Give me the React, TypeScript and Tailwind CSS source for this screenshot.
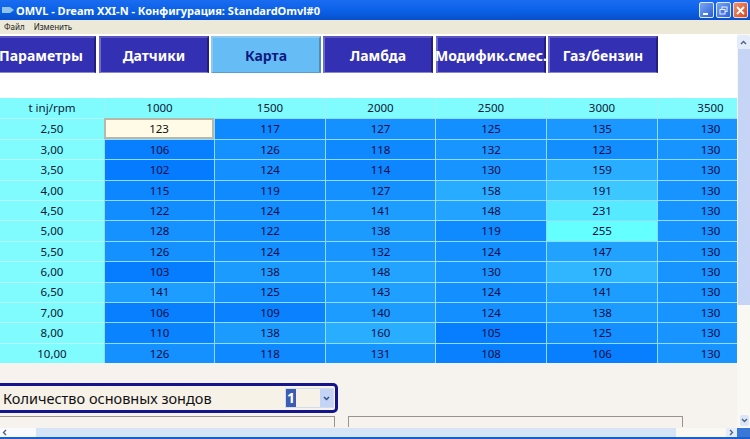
import React from "react";

const cols = ["1000", "1500", "2000", "2500", "3000", "3500"];
const rows: [string, number[]][] = [
  ["2,50", [123, 117, 127, 125, 135, 130]],
  ["3,00", [106, 126, 118, 132, 123, 130]],
  ["3,50", [102, 124, 114, 130, 159, 130]],
  ["4,00", [115, 119, 127, 158, 191, 130]],
  ["4,50", [122, 124, 141, 148, 231, 130]],
  ["5,00", [128, 122, 138, 119, 255, 130]],
  ["5,50", [126, 124, 132, 124, 147, 130]],
  ["6,00", [103, 138, 148, 130, 170, 130]],
  ["6,50", [141, 125, 143, 124, 141, 130]],
  ["7,00", [106, 109, 140, 124, 138, 130]],
  ["8,00", [110, 138, 160, 105, 125, 130]],
  ["10,00", [126, 118, 131, 108, 106, 130]],
];

function cellColor(v: number) {
  const t = Math.max(0, Math.min(1, (v - 100) / 155));
  const r = Math.round(4 + t * 96);
  const g = Math.round(122 + t * 133);
  return `rgb(${r},${g},255)`;
}

function Tab({ label, active, clip }: { label: string; active?: boolean; clip?: string }) {
  return (
    <div
      className={`flex h-[37px] w-[110px] shrink-0 items-center justify-center whitespace-nowrap border-t-2 border-l-2 border-b border-r-2 text-[14px] font-bold ${
        active
          ? "border-t-[#8fc8ee] border-l-[#8fc8ee] border-b-[#5b9cc8] border-r-[#4f8fb4] bg-[#66bdf5] text-[#101a80]"
          : "border-t-[#5c57c0] border-l-[#6f6ad0] border-b-[#8a88c0] border-r-[#23207c] bg-[#3430b4] text-white"
      } ${clip ?? ""}`}
    >
      {label}
    </div>
  );
}

export default function App() {
  return (
    <div className="flex h-[439px] w-[750px] flex-col overflow-hidden bg-[#f5f3ee] font-['Noto_Sans','DejaVu_Sans',sans-serif] text-[#080c48]">
      {/* title bar */}
      <div className="flex h-[20px] shrink-0 items-center bg-gradient-to-b from-[#1a6cf0] via-[#0a62e8] to-[#0850cc] pl-[2px] pr-[2px]">
        <svg width="13" height="12" viewBox="0 0 13 12" className="mr-[1px] shrink-0">
          <path d="M0 3h8l4 3-4 3H0z" fill="#8fc4ea" />
        </svg>
        <span className="text-[11px] font-bold leading-none text-white">
          OMVL - Dream XXI-N - Конфигурация: StandardOmvl#0
        </span>
        <div className="ml-auto flex items-center gap-[2px]">
          <div className="flex h-[16px] w-[15px] items-end justify-start rounded-[2px] border border-[#dbe8fb] bg-gradient-to-br from-[#7aa6f0] to-[#2c5fd8] pb-[2px] pl-[3px]">
            <div className="h-[2px] w-[5px] bg-white" />
          </div>
          <div className="flex h-[16px] w-[15px] items-center justify-center rounded-[2px] border border-[#dbe8fb] bg-gradient-to-br from-[#7aa6f0] to-[#2c5fd8]">
            <svg width="9" height="9" viewBox="0 0 9 9" fill="none" stroke="#e8f0ff" strokeWidth="1">
              <rect x="3" y="1" width="5" height="4.5" />
              <rect x="1" y="3.5" width="5" height="4.5" fill="#4a78e0" />
            </svg>
          </div>
          <div className="flex h-[16px] w-[15px] items-center justify-center rounded-[2px] border border-[#f0d8d0] bg-gradient-to-br from-[#f09070] to-[#d24a20]">
            <svg width="9" height="9" viewBox="0 0 9 9" stroke="#fff" strokeWidth="1.8">
              <path d="M1 1l7 7M8 1l-7 7" />
            </svg>
          </div>
        </div>
      </div>

      {/* menu */}
      <div className="flex h-[14px] shrink-0 items-center gap-[9px] bg-[#ece9d8] pl-[4px] text-[8px] leading-none text-[#222]">
        <span>Файл</span>
        <span>Изменить</span>
      </div>

      {/* body */}
      <div className="flex min-h-0 flex-1">
        <div className="flex min-w-0 flex-1 flex-col overflow-hidden bg-white">
          <div className="flex shrink-0 pt-[2px]">
            <Tab label="Параметры" clip="-ml-[14px] w-[109px]" />
            <Tab label="Датчики" clip="ml-[3px]" />
            <Tab label="Карта" active clip="ml-[2px]" />
            <Tab label="Ламбда" clip="ml-[2px]" />
            <Tab label="Модифик.смес." clip="ml-[3px]" />
            <Tab label="Газ/бензин" clip="ml-[2px]" />
          </div>

          <div className="mt-[25px] grid shrink-0 auto-rows-[20.4px] grid-cols-[104px_110px_111px_110px_111px_111px_80px] bg-[#a8e6ff] text-[11.5px] leading-none">
            <div className="flex items-center justify-center bg-[#80fcff] text-[#0c1838]">t inj/rpm</div>
            {cols.map((c, i) => (
              <div
                key={c}
                className={`flex items-center justify-center border-l border-[#a0f0f4] bg-[#80fcff] text-[#0c1838] ${i === 5 ? "pl-[26px]" : ""}`}
              >
                {c}
              </div>
            ))}
            {rows.map(([label, vals], r) => (
              <React.Fragment key={label}>
                <div className="flex items-center justify-center border-t border-[#b4ffff] bg-[#80fcff] text-[#0c1838]">
                  {label}
                </div>
                {vals.map((v, c) => {
                  const selected = r === 0 && c === 0;
                  return (
                    <div
                      key={c}
                      className={`flex items-center justify-center ${
                        selected
                          ? "border-2 border-[#b8b8a8] bg-[#fffbe6] text-[#111]"
                          : "border-l border-t border-[#8fdcff]"
                      } ${c === 5 ? "pl-[26px]" : ""}`}
                      style={selected ? undefined : { backgroundColor: cellColor(v) }}
                    >
                      {v}
                    </div>
                  );
                })}
              </React.Fragment>
            ))}
          </div>

          {/* lower area */}
          <div className="flex min-h-0 flex-1 flex-col bg-[#f6f3ee]">
            <div className="mt-[20px] flex h-[30px] w-[338px] shrink-0 items-center justify-between rounded-r-[5px] border-y-[3px] border-r-[3px] border-[#14148c] bg-[#f6f2e8] pl-[3px] pr-[1px] text-[14.5px] leading-none text-[#111]">
              <span>Количество основных зондов</span>
              <div className="flex h-[20px] w-[49px] items-center border border-[#d0dcf0]">
                <span className="flex h-[18px] w-[10px] items-center justify-center bg-[#3c5cb4] text-[14px] font-bold text-white">1</span>
                <div className="ml-auto flex h-[18px] w-[13px] items-center justify-center bg-[#c3d4f4]">
                  <svg width="7" height="5" viewBox="0 0 7 5" fill="none" stroke="#30508c" strokeWidth="1.5">
                    <path d="M1 1l2.5 2.5L6 1" />
                  </svg>
                </div>
              </div>
            </div>
            <div className="mt-[3px] flex h-[11px] shrink-0">
              <div className="h-full w-[335px] border-t border-r border-[#9a948c]" />
              <div className="ml-[13px] h-full w-[335px] border-t border-l border-r border-[#9a948c]" />
            </div>
          </div>
        </div>

        {/* vertical scrollbar */}
        <div className="flex w-[13px] shrink-0 flex-col bg-[#f9f8f3]">
          <div className="mt-[1px] flex h-[14px] items-center justify-center rounded-t-[3px] bg-[#e4ecfa]">
            <svg width="7" height="5" viewBox="0 0 7 5" fill="none" stroke="#4d6185" strokeWidth="1.4">
              <path d="M1 4l2.5-2.5L6 4" />
            </svg>
          </div>
          <div className="ml-[1px] h-[256px] bg-[#c6d4f6]" />
          <div className="mt-auto mb-[2px] ml-[3px] flex h-[11px] w-[9px] items-center justify-center rounded-[2px] bg-[#dce6f8]">
            <svg width="7" height="5" viewBox="0 0 7 5" fill="none" stroke="#4d6185" strokeWidth="1.4">
              <path d="M1 1l2.5 2.5L6 1" />
            </svg>
          </div>
        </div>
      </div>

      {/* horizontal scrollbar */}
      <div className="flex h-[9px] shrink-0 items-center bg-[#f9f8f3]">
        <div className="flex h-full w-[36px] items-center bg-[#f8fafd] pl-[2px]">
          <svg width="5" height="7" viewBox="0 0 5 7" fill="none" stroke="#4d6185" strokeWidth="1.4">
            <path d="M4 1L1.5 3.5 4 6" />
          </svg>
        </div>
        <div className="h-full w-[640px] bg-[#d6e4f7]" />
        <div className="ml-auto flex h-full w-[11px] items-center justify-center bg-[#e4ecfa]">
          <svg width="5" height="7" viewBox="0 0 5 7" fill="none" stroke="#4d6185" strokeWidth="1.4">
            <path d="M1 1l2.5 2.5L1 6" />
          </svg>
        </div>
        <div className="h-full w-[13px] bg-[#3a78d8]" />
      </div>

      {/* window bottom edge */}
      <div className="h-[2px] shrink-0 bg-[#1a5fd0]" />
    </div>
  );
}
